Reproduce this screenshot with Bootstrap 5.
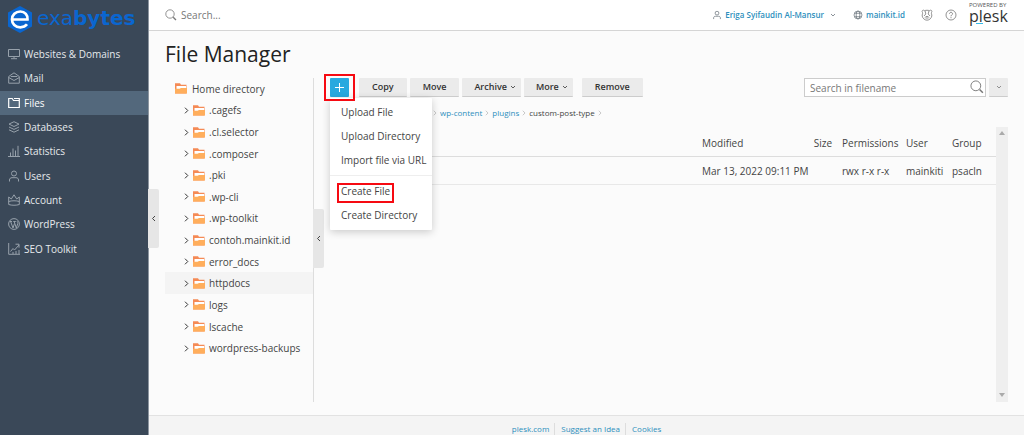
<!DOCTYPE html>
<html lang="en">
<head>
<meta charset="utf-8">
<meta name="viewport" content="width=device-width, initial-scale=1">
<title>File Manager</title>
<link href="https://cdn.jsdelivr.net/npm/bootstrap@5.3.0/dist/css/bootstrap.min.css" rel="stylesheet">
<style>
body { font-family: "Open Sans", "Liberation Sans", sans-serif; font-size: 10px; line-height: 16px; color: #444; background: #fbfbfb; }
a { color: #2d8fbd; text-decoration: none; }
svg { display: block; flex: none; }
.ico { width: 12px; height: 12px; fill: none; stroke: currentColor; stroke-width: 1; }
.sidebar { width: 149px; background: #3a4858; border-right: 1px solid #8d96a0; }
.brand { height: 42px; padding: 6px 0 0 8px; color: #0a66d0; font: 20px/25px "DejaVu Sans", sans-serif; gap: 5px; }
.side-nav { height: 219px; }
.side-nav a { color: #e6eaed; padding-left: 8px; gap: 4px; }
.side-nav .ico { color: #97a1ab; }
.side-nav a.active { background: #53687c; color: #fff; }
.side-nav a.active .ico { color: #fff; }
.topbar { height: 31px; background: #fff; border-bottom: 1px solid #d5d5d5; padding: 0 16px; color: #777; }
.topbar a { font-weight: 600; font-size: 8px; gap: 2px; }
.global-search { border: 0; background: none; width: 120px; padding: 0; font-size: 10px; color: #777; }
.global-search::placeholder, .file-search::placeholder { color: #777; opacity: 1; }
.icon-btn { border: 0; background: none; padding: 0; color: #777; margin-left: 12px; }
.powered { color: #333; width: 39px; margin-left: 12px; padding-top: 2px; }
.powered small { font-size: 6px; line-height: 6px; color: #555; white-space: nowrap; }
.powered span { font-size: 16px; line-height: 16px; font-weight: 500; }
.powered i { width: 7px; height: 1px; background: #35b8e6; left: 7px; bottom: 0; }
.content { padding: 8px 16px 13px; }
h1 { font-size: 21px; line-height: 30px; margin: 0 0 9px; color: #222; }
.tree-pane { width: 149px; border-right: 1px solid #ddd; }
.tree { height: 281px; }
.tree li { gap: 4px; padding-left: 19px; color: #444; }
.tree li.root { padding-left: 10px; gap: 5px; }
.tree li.current { background: #f4f4f4; }
.tree .chev { width: 5px; height: 7px; stroke: #333; fill: none; }
.handle { width: 11px; height: 59px; left: 100%; background: #e6e6e6; border: 0; border-radius: 0 2px 2px 0; color: #444; padding: 0; z-index: 2; }
.handle.side { top: 189px; }
.handle.mid { top: 131px; }
.files-pane { padding-left: 16px; }
.toolbar .add-group { margin-right: 10px; }
.tool-set { gap: 3px; }
.tool { height: 19px; border: 0; border-bottom: 1px solid #ccc; border-radius: 1px; background: #ebebeb; color: #333; font-size: 9px; line-height: 16px; font-weight: 600; padding: 0 13px; }
.tool.drop { padding: 0 5px 0 12px; gap: 3px; }
.tool.remove { margin-left: 6px; }
.tool.more-search { width: 19px; padding: 0; margin-left: 3px; color: #777; }
.tool.plus { background: #28a9df; border: 0; width: 19px; padding: 0; color: #fff; }
.file-search { width: 182px; height: 19px; border: 1px solid #ccc; background: #fff; padding: 0 20px 0 5px; font-size: 10px; color: #444; }
.file-search + svg { right: 2px; top: 2px; color: #777; }
.add-menu { display: block; top: 20px; left: 0; min-width: 102px; border: 0; border-radius: 1px; padding: 2px 0 3px; font-size: 10px; box-shadow: 0 2px 8px rgba(0,0,0,.2); }
.add-menu .dropdown-item { line-height: 24px; padding: 0 6px 0 11px; color: #444; }
.add-menu hr { margin: 3px 0; border-color: #eee; opacity: 1; }
.mark-box { border: 2px solid #f60a12; pointer-events: none; }
.mark-plus { width: 31px; height: 27px; left: -6px; top: -4px; z-index: 1001; }
.mark-file { width: 57px; height: 20px; left: 7px; top: 4px; }
.crumbs { padding: 8px 0 0 103px; gap: 3px; font-size: 8px; color: #444; }
.crumbs svg { width: 4px; height: 6px; stroke: #bbb; fill: none; }
.list-wrap { margin-top: 6px; height: 275px; }
.file-table { table-layout: fixed; font-size: 10px; --bs-table-bg: transparent; --bs-table-color: #444; }
.file-table th, .file-table td { font-weight: 400; padding: 6px 0 5px 5px; line-height: 16px; border-color: #e8e8e8; white-space: nowrap; color: #444; }
.file-table thead th { padding-top: 8px; border-color: #ddd; }
.file-table th.text-end { padding-right: 5px; }
.scroll-track { width: 12px; background: #efefef; padding: 4px 0 5px; }
footer { height: 20px; background: #f4f4f4; border-top: 1px solid #e2e2e2; font-size: 8px; padding-top: 6px; }
footer a { line-height: 12px; }
footer a + a { border-left: 1px solid #ddd; margin-left: 5px; padding-left: 6px; }
</style>
</head>
<body>
<svg class="d-none">
  <symbol id="folder" viewBox="0 0 12 11"><path d="M0 .3h5l1 1.500h5.500V10.500H0z" fill="#f58a55"/><path d="M1.500 3h9.500v3h-9.500z" fill="#fff"/><path d="M0 5.800h4.500L6 5H12V10.500H0z" fill="#ffae5c"/></symbol>
  <symbol id="right" viewBox="0 0 5 7"><path d="M1 .7l2.800 2.800L1 6.300"/></symbol>
  <symbol id="left" viewBox="0 0 5 7"><path d="M4 1L1.500 3.500 4 6" fill="none" stroke="currentColor"/></symbol>
  <symbol id="down" viewBox="0 0 6 4"><path d="M1 1l2 2 2-2" fill="none" stroke="currentColor" stroke-width=".8"/></symbol>
  <symbol id="lens" viewBox="0 0 12 12"><circle cx="5" cy="5" r="4.200" fill="none" stroke="currentColor" stroke-width=".8"/><path d="M8.200 8.200l2.800 2.800" stroke="currentColor" stroke-width="1.300"/></symbol>
  <symbol id="user" viewBox="0 0 12 12"><circle cx="6" cy="3.500" r="2.500"/><path d="M1.500 11.500V10c0-1.500 1-2.300 2.500-2.300h4c1.500 0 2.500.8 2.500 2.300v1.500"/></symbol>
</svg>
<div class="d-flex min-vh-100">
  <aside class="sidebar flex-shrink-0 position-relative">
    <div class="brand d-flex align-items-start">
      <svg width="24" height="27" viewBox="0 0 24 27"><path d="M12 0l12 6.500v14L12 27 0 20.500v-14z" fill="#0a66d0"/><path d="M5 13.500h14.500C20 9 17 5.500 12.300 5.500 7.500 5.500 4 9 4 13.500c0 4.500 3.300 7.800 8.300 7.800 3 0 5.200-1 6.700-3" fill="none" stroke="#fff" stroke-width="2.700"/></svg>
      <span>exa<b>bytes</b></span>
    </div>
    <nav class="side-nav d-flex flex-column">
      <a href="#" class="flex-fill d-flex align-items-center"><svg class="ico" viewBox="0 0 12 12"><path d="M.5 1.500h11v7H.5zM6 8.500v2M3 10.700h6"/></svg>Websites &amp; Domains</a>
      <a href="#" class="flex-fill d-flex align-items-center"><svg class="ico" viewBox="0 0 12 12"><path d="M.7 4.500L6 .8l5.300 3.700v6.700H.7zM.7 5.500L6 8.500l5.300-3M3 5V4.500h6V5"/></svg>Mail</a>
      <a href="#" class="active flex-fill d-flex align-items-center" aria-current="page"><svg class="ico" viewBox="0 0 12 12"><path d="M.7 1.500h3.500l1.300 2h5.800v7H.7zM6 1.500h5.300v2" stroke-width="1.200"/></svg>Files</a>
      <a href="#" class="flex-fill d-flex align-items-center"><svg class="ico" viewBox="0 0 12 12"><path d="M6 .7l5 2.400-5 2.400-5-2.400zM1 6l5 2.400L11 6M1 8.800l5 2.400 5-2.400"/></svg>Databases</a>
      <a href="#" class="flex-fill d-flex align-items-center"><svg class="ico" viewBox="0 0 12 12"><path d="M0 11.500h12M2.500 11V7.500M5 11V3.500M7.500 11V5.500M10 11V.8"/></svg>Statistics</a>
      <a href="#" class="flex-fill d-flex align-items-center"><svg class="ico"><use href="#user"/></svg>Users</a>
      <a href="#" class="flex-fill d-flex align-items-center"><svg class="ico" viewBox="0 0 12 12"><path d="M.7 3l2.600 2L6 .8 8.700 5l2.600-2v7.500c-3 1-7.600 1-10.600 0zM.7 7.500c3-1 7.600-1 10.600 0"/></svg>Account</a>
      <a href="#" class="flex-fill d-flex align-items-center"><svg class="ico" viewBox="0 0 12 12"><circle cx="6" cy="6" r="5.400"/><path d="M2 3.500h2M5.300 3.500h2.500M2.700 3.700L5 10l1.500-4.500M6.200 3.700L8.300 10l1.500-4.500c.3-1-.8-1.500-.6-2.500"/></svg>WordPress</a>
      <a href="#" class="flex-fill d-flex align-items-center"><svg class="ico" viewBox="0 0 12 12"><path d="M.7 0v11.300H12M2.500 8.500L5 5.500l1.500 1.500L11 2M7.500 1.200H11v3.500M5 11V9M8 11V8M11 11V7"/></svg>SEO Toolkit</a>
    </nav>
    <button class="handle side position-absolute d-flex align-items-center justify-content-center" aria-label="Collapse sidebar"><svg width="5" height="7"><use href="#left"/></svg></button>
  </aside>

  <div class="flex-grow-1 d-flex flex-column">
    <header class="topbar d-flex align-items-center">
      <label class="d-flex align-items-center gap-1 me-auto"><svg width="12" height="12"><use href="#lens"/></svg><input class="global-search" type="text" placeholder="Search..."></label>
      <a href="#" class="d-flex align-items-center"><svg class="ico text-secondary" viewBox="-2 -2 16 16"><use href="#user" width="12" height="12"/></svg>Eriga Syifaudin Al-Mansur<svg class="text-secondary ms-1" width="6" height="4"><use href="#down"/></svg></a>
      <a href="#" class="d-flex align-items-center ms-3"><svg class="ico text-secondary" viewBox="-2 -2 16 16"><circle cx="6" cy="6" r="5.300"/><ellipse cx="6" cy="6" rx="2.500" ry="5.300"/><path d="M1.500 3.700h9M1.500 8.300h9"/></svg>mainkit.id</a>
      <button class="icon-btn ms-3" aria-label="Advisor"><svg class="ico" viewBox="0 0 12 12"><g stroke-width=".8"><path d="M3.500 1.700C2 .3.300 2 1.500 3.500c.5 1-.5 2-.3 3.500.3 2 2.300 4.200 4.800 4.200s4.500-2.200 4.800-4.200c.2-1.500-.8-2.500-.3-3.500C11.700 2 10 .3 8.500 1.700c-1.500-.6-3.500-.6-5 0z"/><path d="M4 1.700L4.800 5 3 7M8 1.700L7.200 5 9 7M4 8.500c.5-1.500 3.500-1.500 4 0M4.500 9h3"/></g></svg></button>
      <button class="icon-btn" aria-label="Help"><svg class="ico" viewBox="0 0 12 12"><circle cx="6" cy="6" r="5" stroke-width=".8"/><path d="M4.500 4.800c0-2 3-2 3 0C7.500 6 6 6 6 7.300M6 8.200v1" stroke-width=".9"/></svg></button>
      <div class="powered position-relative d-flex flex-column align-self-start"><small>POWERED BY</small><span>plesk</span><i class="position-absolute"></i></div>
    </header>

    <main class="content flex-grow-1">
      <h1>File Manager</h1>
      <div class="d-flex">
        <section class="tree-pane flex-shrink-0 position-relative">
          <ul class="tree list-unstyled d-flex flex-column m-0">
            <li class="root flex-fill d-flex align-items-center"><svg width="12" height="11"><use href="#folder"/></svg>Home directory</li>
            <li class="flex-fill d-flex align-items-center"><svg class="chev"><use href="#right"/></svg><svg width="12" height="11"><use href="#folder"/></svg>.cagefs</li>
            <li class="flex-fill d-flex align-items-center"><svg class="chev"><use href="#right"/></svg><svg width="12" height="11"><use href="#folder"/></svg>.cl.selector</li>
            <li class="flex-fill d-flex align-items-center"><svg class="chev"><use href="#right"/></svg><svg width="12" height="11"><use href="#folder"/></svg>.composer</li>
            <li class="flex-fill d-flex align-items-center"><svg class="chev"><use href="#right"/></svg><svg width="12" height="11"><use href="#folder"/></svg>.pki</li>
            <li class="flex-fill d-flex align-items-center"><svg class="chev"><use href="#right"/></svg><svg width="12" height="11"><use href="#folder"/></svg>.wp-cli</li>
            <li class="flex-fill d-flex align-items-center"><svg class="chev"><use href="#right"/></svg><svg width="12" height="11"><use href="#folder"/></svg>.wp-toolkit</li>
            <li class="flex-fill d-flex align-items-center"><svg class="chev"><use href="#right"/></svg><svg width="12" height="11"><use href="#folder"/></svg>contoh.mainkit.id</li>
            <li class="flex-fill d-flex align-items-center"><svg class="chev"><use href="#right"/></svg><svg width="12" height="11"><use href="#folder"/></svg>error_docs</li>
            <li class="current flex-fill d-flex align-items-center"><svg class="chev"><use href="#right"/></svg><svg width="12" height="11"><use href="#folder"/></svg>httpdocs</li>
            <li class="flex-fill d-flex align-items-center"><svg class="chev"><use href="#right"/></svg><svg width="12" height="11"><use href="#folder"/></svg>logs</li>
            <li class="flex-fill d-flex align-items-center"><svg class="chev"><use href="#right"/></svg><svg width="12" height="11"><use href="#folder"/></svg>lscache</li>
            <li class="flex-fill d-flex align-items-center"><svg class="chev"><use href="#right"/></svg><svg width="12" height="11"><use href="#folder"/></svg>wordpress-backups</li>
          </ul>
          <button class="handle mid position-absolute d-flex align-items-center justify-content-center" aria-label="Collapse tree"><svg width="5" height="7"><use href="#left"/></svg></button>
        </section>

        <section class="files-pane flex-grow-1">
          <div class="toolbar d-flex">
            <div class="add-group position-relative">
              <button class="tool plus d-flex align-items-center justify-content-center" aria-label="Add"><svg width="9" height="9"><path d="M4.500 0v9M0 4.500h9" stroke="#fff"/></svg></button>
              <div class="dropdown-menu add-menu">
                <a class="dropdown-item" href="#">Upload File</a>
                <a class="dropdown-item" href="#">Upload Directory</a>
                <a class="dropdown-item" href="#">Import file via URL</a>
                <hr class="dropdown-divider">
                <a class="dropdown-item position-relative" href="#">Create File<span class="mark-box mark-file position-absolute"></span></a>
                <a class="dropdown-item" href="#">Create Directory</a>
              </div>
              <span class="mark-box mark-plus position-absolute"></span>
            </div>
            <div class="tool-set d-flex">
              <button class="tool">Copy</button>
              <button class="tool">Move</button>
              <button class="tool drop d-flex align-items-center">Archive<svg width="6" height="4"><use href="#down"/></svg></button>
              <button class="tool drop d-flex align-items-center">More<svg width="6" height="4"><use href="#down"/></svg></button>
              <button class="tool remove">Remove</button>
            </div>
            <div class="position-relative ms-auto">
              <input class="file-search d-block" type="text" placeholder="Search in filename" aria-label="Search in filename"><svg class="position-absolute" width="14" height="14"><use href="#lens"/></svg>
            </div>
            <button class="tool more-search d-flex align-items-center justify-content-center" aria-label="Search options"><svg width="6" height="4"><use href="#down"/></svg></button>
          </div>
          <nav class="crumbs d-flex align-items-center" aria-label="breadcrumb">
            <svg><use href="#right"/></svg><a href="#">wp-content</a><svg><use href="#right"/></svg><a href="#">plugins</a><svg><use href="#right"/></svg><span>custom-post-type</span><svg><use href="#right"/></svg>
          </nav>
          <div class="list-wrap d-flex">
            <div class="flex-grow-1">
              <table class="table file-table m-0">
                <colgroup><col><col style="width:111px"><col style="width:29px"><col style="width:64px"><col style="width:46px"><col style="width:49px"></colgroup>
                <thead><tr><th></th><th>Modified</th><th class="text-end">Size</th><th>Permissions</th><th>User</th><th>Group</th></tr></thead>
                <tbody><tr><td></td><td>Mar 13, 2022 09:11 PM</td><td></td><td>rwx r-x r-x</td><td>mainkiti</td><td>psacln</td></tr></tbody>
              </table>
            </div>
            <div class="scroll-track flex-shrink-0 d-flex flex-column justify-content-between align-items-center"><svg width="6" height="4"><path d="M3 0l3 4H0z" fill="#aaa"/></svg><svg width="6" height="4"><path d="M0 0h6L3 4z" fill="#aaa"/></svg></div>
          </div>
        </section>
      </div>
    </main>
    <footer class="d-flex justify-content-center align-items-center"><a href="#">plesk.com</a><a href="#">Suggest an Idea</a><a href="#">Cookies</a></footer>
  </div>
</div>
<script src="https://cdn.jsdelivr.net/npm/bootstrap@5.3.0/dist/js/bootstrap.bundle.min.js"></script>
</body>
</html>
